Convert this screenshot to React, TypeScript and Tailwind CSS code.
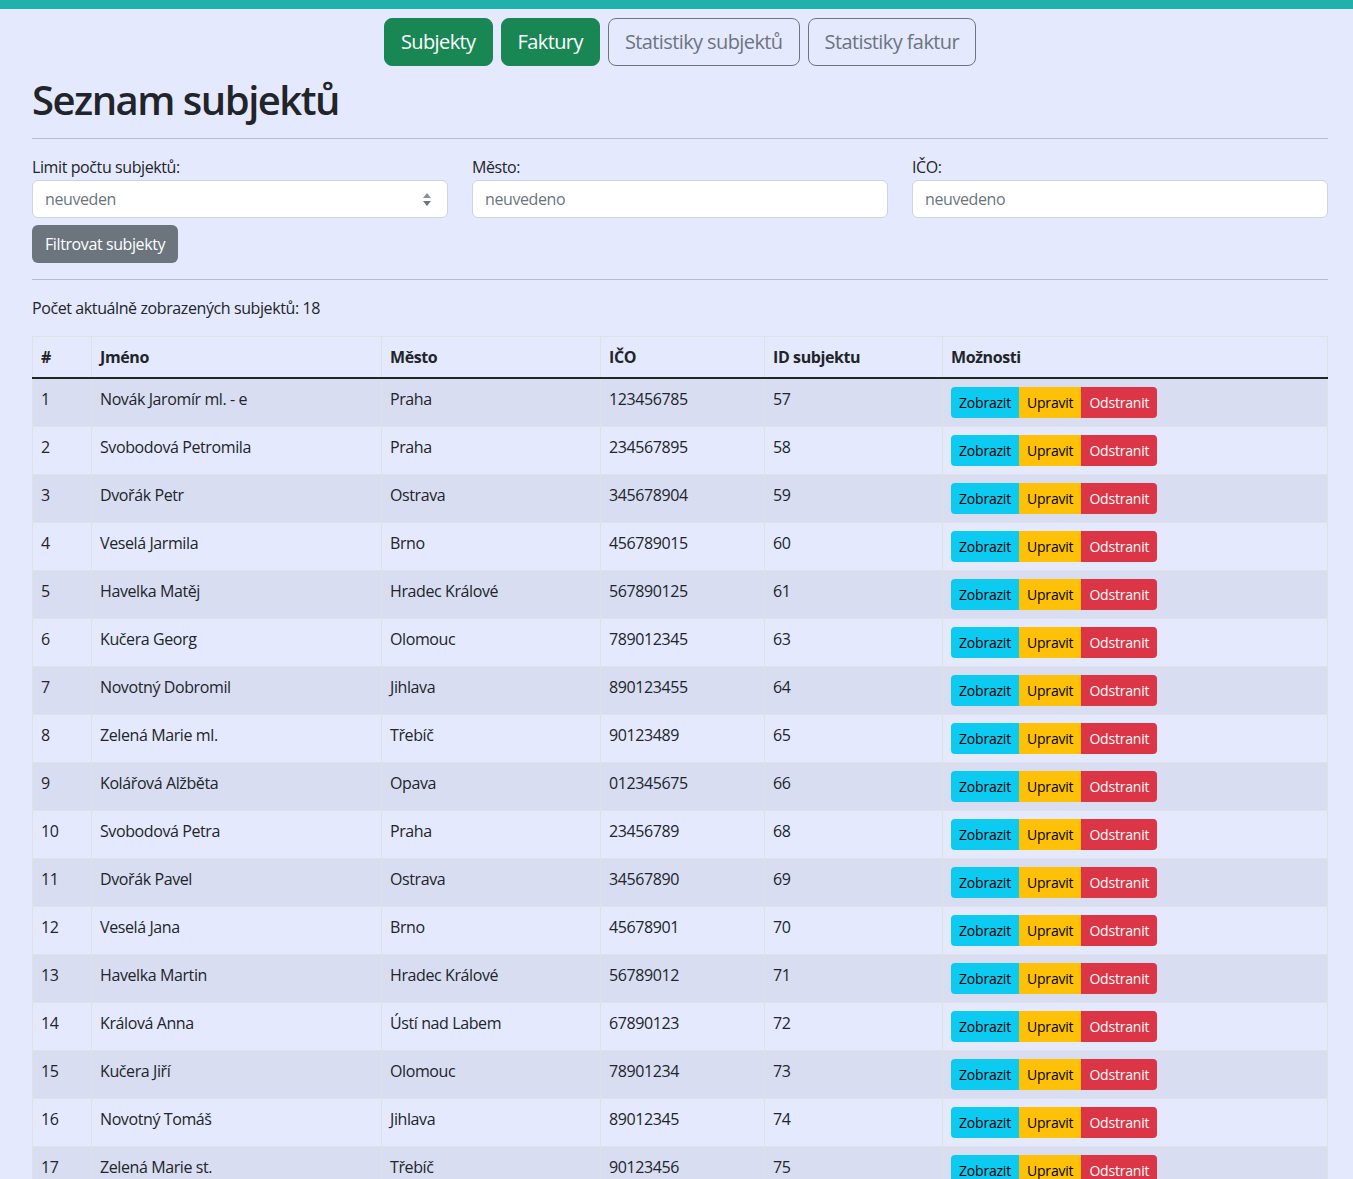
import React from "react";

const rows: [number, string, string, string, number][] = [
  [1, "Novák Jaromír ml. - e", "Praha", "123456785", 57],
  [2, "Svobodová Petromila", "Praha", "234567895", 58],
  [3, "Dvořák Petr", "Ostrava", "345678904", 59],
  [4, "Veselá Jarmila", "Brno", "456789015", 60],
  [5, "Havelka Matěj", "Hradec Králové", "567890125", 61],
  [6, "Kučera Georg", "Olomouc", "789012345", 63],
  [7, "Novotný Dobromil", "Jihlava", "890123455", 64],
  [8, "Zelená Marie ml.", "Třebíč", "90123489", 65],
  [9, "Kolářová Alžběta", "Opava", "012345675", 66],
  [10, "Svobodová Petra", "Praha", "23456789", 68],
  [11, "Dvořák Pavel", "Ostrava", "34567890", 69],
  [12, "Veselá Jana", "Brno", "45678901", 70],
  [13, "Havelka Martin", "Hradec Králové", "56789012", 71],
  [14, "Králová Anna", "Ústí nad Labem", "67890123", 72],
  [15, "Kučera Jiří", "Olomouc", "78901234", 73],
  [16, "Novotný Tomáš", "Jihlava", "89012345", 74],
  [17, "Zelená Marie st.", "Třebíč", "90123456", 75],
  [18, "Králová Eva", "Ústí nad Labem", "01234567", 76],
];

export default function App() {
  return (
    <div
      className="min-h-screen bg-[#e5e9fd] text-[#212529] text-[16px] leading-[24px] tracking-[-0.4px]"
      style={{ fontFamily: '"Open Sans", "Noto Sans", sans-serif' }}
    >
      <div className="h-[9px] bg-[#20b2aa]" />
      <div className="pl-[32px] pr-[25px]">
        <nav className="flex justify-center gap-[8px] pt-[9px] tracking-[-0.6px]">
          <button className="h-[48px] px-[16px] rounded-[8px] bg-[#198754] border border-[#198754] text-white text-[20px]">Subjekty</button>
          <button className="h-[48px] px-[16px] rounded-[8px] bg-[#198754] border border-[#198754] text-white text-[20px]">Faktury</button>
          <button className="h-[48px] px-[16px] rounded-[8px] border border-[#6c757d] text-[#6c757d] text-[20px]">Statistiky subjektů</button>
          <button className="h-[48px] px-[16px] rounded-[8px] border border-[#6c757d] text-[#6c757d] text-[20px]">Statistiky faktur</button>
        </nav>
        <h1 className="text-[40px] leading-[48px] font-semibold tracking-[-1.5px] mt-[10px] mb-[8px]">Seznam subjektů</h1>
        <hr className="border-0 border-t border-[#b9bccb] mb-[16px] mt-[14px]" />
        <div className="grid grid-cols-3 gap-x-[24px]">
          <div>
            <label className="block mb-[1px]">Limit počtu subjektů:</label>
            <div className="h-[38px] bg-white border border-[#ced4da] rounded-[6px] flex items-center justify-between px-[12px]">
              <span className="text-[#6c757d]">neuveden</span>
              <svg width="10" height="18" viewBox="0 0 10 18" className="mr-[3px]">
                <path d="M5 3 L9 8 L1 8 Z" fill="#8a8f94" />
                <path d="M5 16 L9 11 L1 11 Z" fill="#6c757d" />
              </svg>
            </div>
          </div>
          <div>
            <label className="block mb-[1px]">Město:</label>
            <div className="h-[38px] bg-white border border-[#ced4da] rounded-[6px] flex items-center px-[12px]">
              <span className="text-[#6c757d]">neuvedeno</span>
            </div>
          </div>
          <div>
            <label className="block mb-[1px]">IČO:</label>
            <div className="h-[38px] bg-white border border-[#ced4da] rounded-[6px] flex items-center px-[12px]">
              <span className="text-[#6c757d]">neuvedeno</span>
            </div>
          </div>
        </div>
        <button className="mt-[7px] h-[38px] px-[13px] rounded-[6px] bg-[#6c757d] text-white">Filtrovat subjekty</button>
        <hr className="border-0 border-t border-[#b9bccb] mt-[16px] mb-[16px]" />
        <p className="mb-[16px]">Počet aktuálně zobrazených subjektů: 18</p>
        <table className="w-full border-collapse border border-[#dee2e6]">
          <thead>
            <tr className="border-b-2 border-b-[#212529]">
              <th className="text-left font-bold px-[8px] py-[8px] h-[41px] border-r border-[#dee2e6] w-[59px]">#</th>
              <th className="text-left font-bold px-[8px] py-[8px] border-r border-[#dee2e6] w-[290px]">Jméno</th>
              <th className="text-left font-bold px-[8px] py-[8px] border-r border-[#dee2e6] w-[219px]">Město</th>
              <th className="text-left font-bold px-[8px] py-[8px] border-r border-[#dee2e6] w-[164px]">IČO</th>
              <th className="text-left font-bold px-[8px] py-[8px] border-r border-[#dee2e6] w-[178px]">ID subjektu</th>
              <th className="text-left font-bold px-[8px] py-[8px]">Možnosti</th>
            </tr>
          </thead>
          <tbody>
            {rows.map((r, i) => (
              <tr key={r[0]} className={`border-b border-[#dee2e6] ${i % 2 === 0 ? "bg-[#d9ddf2]" : ""}`}>
                <td className="px-[8px] pt-[8px] align-top border-r border-[#dee2e6]">{r[0]}</td>
                <td className="px-[8px] pt-[8px] align-top border-r border-[#dee2e6]">{r[1]}</td>
                <td className="px-[8px] pt-[8px] align-top border-r border-[#dee2e6]">{r[2]}</td>
                <td className="px-[8px] pt-[8px] align-top border-r border-[#dee2e6]">{r[3]}</td>
                <td className="px-[8px] pt-[8px] align-top border-r border-[#dee2e6]">{r[4]}</td>
                <td className="px-[8px] py-[8px] align-top">
                  <div className="flex text-[14px] leading-[21px] tracking-[-0.2px]">
                    <button className="h-[31px] px-[8px] bg-[#0dcaf0] text-black rounded-l-[4px]">Zobrazit</button>
                    <button className="h-[31px] px-[8px] bg-[#ffc107] text-black">Upravit</button>
                    <button className="h-[31px] px-[8px] bg-[#dc3545] text-white rounded-r-[4px]">Odstranit</button>
                  </div>
                </td>
              </tr>
            ))}
          </tbody>
        </table>
      </div>
    </div>
  );
}
